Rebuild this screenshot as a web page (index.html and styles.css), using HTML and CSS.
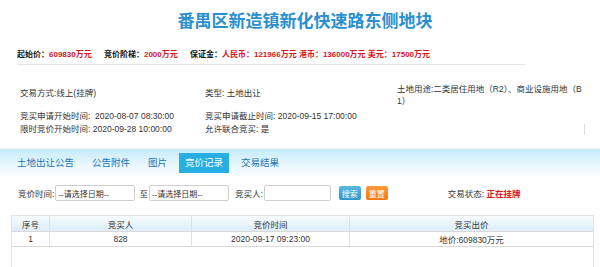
FILE: index.html
```html
<!DOCTYPE html>
<html lang="zh-CN">
<head>
    <meta charset="UTF-8">
    <title>番禺区新造镇新化快速路东侧地块</title>
    <link rel="stylesheet" href="styles.css">
</head>
<body>
    <!-- title -->
    <h1 class="title">番禺区新造镇新化快速路东侧地块</h1>

    <!-- price line -->
    <div class="prices">
        <span class="item"><b>起始价：</b><em>609830万元</em></span>
        <span class="item"><b>竞价阶梯：</b><em>2000万元</em></span>
        <span class="item"><b>保证金：</b><em>人民币：121966万元 港币：136000万元 美元：17500万元</em></span>
    </div>

    <!-- info -->
    <div class="info">
        <div class="cell top">交易方式:线上(挂牌)</div>
        <div class="cell top">类型: 土地出让</div>
        <div class="cell use">土地用途:二类居住用地（R2）、商业设施用地（B1）</div>
        <div class="cell">竞买申请开始时间:&nbsp; 2020-08-07 08:30:00</div>
        <div class="cell">竞买申请截止时间: 2020-09-15 17:00:00</div>
        <div class="cell"></div>
        <div class="cell">限时竞价开始时间: 2020-09-28 10:00:00</div>
        <div class="cell">允许联合竞买: 是</div>
        <div class="cell"><span class="mark"></span></div>
    </div>

    <!-- tabs -->
    <div class="tabbar">
        <a class="tab">土地出让公告</a>
        <a class="tab">公告附件</a>
        <a class="tab">图片</a>
        <a class="tab active">竞价记录</a>
        <a class="tab">交易结果</a>
    </div>

    <!-- search -->
    <div class="search">
        <span>竞价时间:</span>
        <input class="date" value="--请选择日期--">
        <span>至</span>
        <input class="date" value="--请选择日期--">
        <span class="buyer">竞买人:</span>
        <input class="name">
        <button class="btn blue">搜索</button>
        <button class="btn orange">重置</button>
        <span class="status">交易状态: <strong>正在挂牌</strong></span>
    </div>

    <!-- records -->
    <div class="records">
        <table>
            <tr>
                <th class="c1">序号</th>
                <th class="c2">竞买人</th>
                <th class="c3">竞价时间</th>
                <th>竞买出价</th>
            </tr>
            <tr>
                <td>1</td>
                <td>828</td>
                <td>2020-09-17 09:23:00</td>
                <td>地价:609830万元</td>
            </tr>
        </table>
    </div>
</body>
</html>
```

FILE: styles.css
```css
body {
    margin: 0;
    font-family: "Liberation Sans", "Noto Sans CJK SC", sans-serif;
    font-size: 9px;
    color: #333;
    background: #fff;
    overflow: hidden;
}
.title {
    margin: 0;
    padding: 7px 0 0 10px;
    height: 33px;
    text-align: center;
    font-size: 17px;
    font-weight: bold;
    color: #2a8fd0;
    box-sizing: border-box;
}
.prices {
    margin: 9px 75px 0 17px;
    padding: 7px 0 4px;
    line-height: 11px;
    border-bottom: 1px solid #e6e6e6;
    font-size: 8px;
    white-space: nowrap;
}
.prices .item {
    margin-right: 10px;
}
.prices b {
    color: #111;
}
.prices em {
    font-style: normal;
    font-weight: bold;
    color: #d8141c;
}
.info {
    display: grid;
    grid-template-columns: 185px 192px 190px;
    row-gap: 1px;
    margin: 18px 0 0 20px;
    font-size: 8.5px;
    color: #333;
    line-height: 12px;
    align-items: center;
}
.info .top {
    align-self: start;
    padding-top: 4px;
}
.info .use {
    width: 188px;
    word-break: break-all;
    margin-bottom: 2px;
}
.info .mark {
    display: block;
    margin: 0 0 0 187px;
    width: 1px;
    height: 11px;
    background: #ddd;
}
.tabbar {
    margin-top: 13px;
    height: 30px;
    padding: 4px 0 0 17px;
    box-sizing: border-box;
    display: flex;
    align-items: flex-start;
    gap: 18px;
    background: linear-gradient(#c6ebf8, #e8f7fd 55%, #fff);
    border-top: 1px solid #f2f2f2;
}
.tab {
    font-size: 9.5px;
    line-height: 20px;
    color: #2573b5;
}
.tab.active {
    background: #27aee2;
    color: #fff;
    padding: 0 6px;
    margin: 0 -6px;
}
.search {
    display: flex;
    align-items: center;
    margin: 7px 0 0 18px;
    font-size: 8.5px;
    color: #333;
}
.search input {
    border: 1px solid #cfcfcf;
    border-radius: 2px;
    font-size: 8px;
    padding: 0 2px;
    font-family: inherit;
    color: #333;
    box-sizing: border-box;
    height: 16px;
}
.search .date {
    width: 80px;
    margin: 0 4px 0 1px;
}
.search .buyer {
    margin-left: 2px;
}
.search .name {
    width: 67px;
    margin-left: 1px;
}
.btn {
    height: 14px;
    width: 22px;
    border: none;
    border-radius: 2px;
    color: #fff;
    font-size: 8px;
    padding: 0;
    font-family: inherit;
}
.btn.blue {
    margin-left: 8px;
    background: linear-gradient(#5ab8e0, #2f95c9);
}
.btn.orange {
    margin-left: 5px;
    background: linear-gradient(#fb9a3c, #f27a14);
}
.status {
    margin-left: 60px;
}
.status strong {
    color: #e1141d;
}
.records {
    margin: 14px 6px 0 11px;
    height: 52px;
    border: 1px solid #e3e3e3;
    border-bottom: none;
}
table {
    width: 100%;
    border-collapse: collapse;
    font-size: 8.5px;
}
th {
    height: 15px;
    font-weight: normal;
    color: #333;
    background: linear-gradient(#f6fbfe, #dcedf8);
    border-bottom: 1px solid #d9d9d9;
    border-right: 1px solid #e0e0e0;
    padding: 0;
}
td {
    height: 14px;
    text-align: center;
    border-bottom: 1px solid #d9d9d9;
    border-right: 1px solid #e0e0e0;
    padding: 0;
}
th:last-child, td:last-child {
    border-right: none;
}
.c1 {
    width: 37px;
}
.c2 {
    width: 141px;
}
.c3 {
    width: 157px;
}
```
